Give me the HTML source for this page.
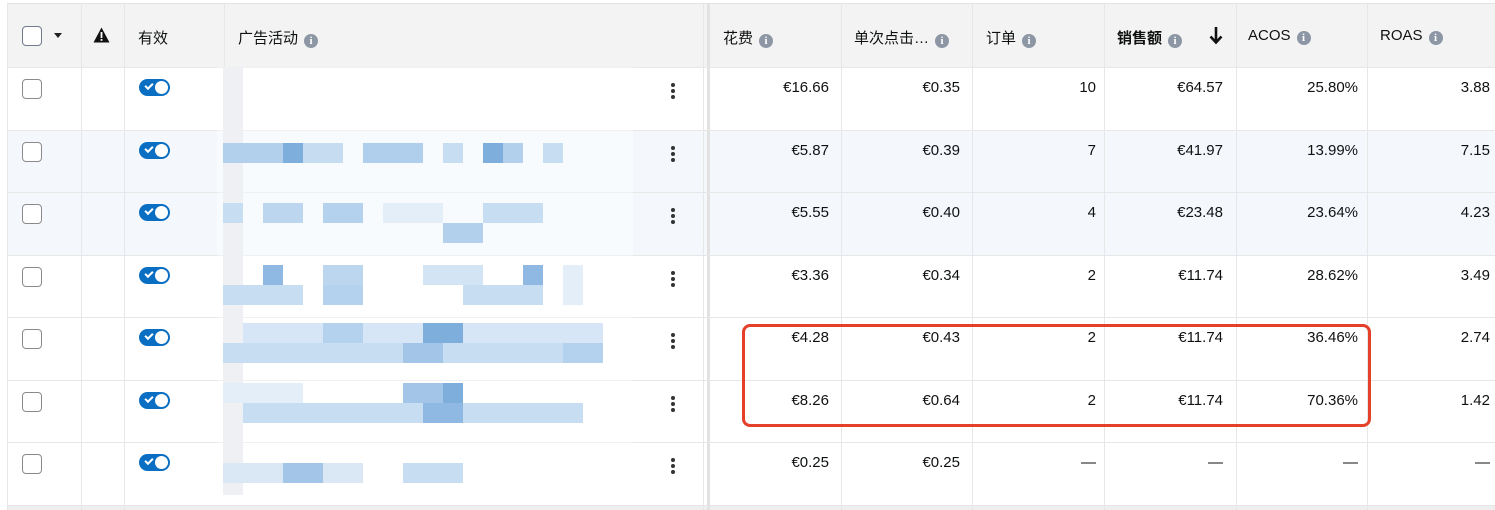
<!DOCTYPE html><html><head><meta charset="utf-8"><style>
body{margin:0;width:1495px;height:510px;overflow:hidden;background:#fff;font-family:"Liberation Sans","Noto Sans CJK SC",sans-serif;font-size:15px;color:#0f1111;position:relative}
.a{position:absolute}
.hd{position:absolute;left:7px;top:3px;width:1488px;height:64px;background:#f3f3f3;border-top:1px solid #e3e3e3}
.vl{position:absolute;top:3px;width:1px;height:507px;background:#e7e7e7}
.hl{position:absolute;left:7px;width:1488px;height:1px;background:#e7e7e7}
.cb{position:absolute;width:18px;height:18px;border:1.5px solid #8a8a8a;border-radius:4px;background:#fff}
.tg{position:absolute;width:31px;height:17px;border-radius:9px;background:#0a6fc2}
.tg:after{content:"";position:absolute;right:2px;top:2px;width:13px;height:13px;border-radius:50%;background:#fff}
.tg:before{content:"";position:absolute;left:6px;top:4px;width:6px;height:3px;border-left:2px solid #fff;border-bottom:2px solid #fff;transform:rotate(-45deg)}
.r{position:absolute;text-align:right}
.h{position:absolute;top:27px}
.i{display:inline-block;width:14px;height:14px;border-radius:50%;background:#8d96a4;color:#fff;font-size:11px;line-height:14px;text-align:center;font-weight:bold;vertical-align:-1px;margin-left:6px;font-family:"Liberation Serif",serif}
.dots{position:absolute;left:671px;width:4px}
.dots i{display:block;width:4px;height:4px;border-radius:50%;background:#333;margin-bottom:2px}
.b{position:absolute;width:20px;height:20px}
</style></head><body>
<div class="hd"></div>
<div class="a" style="left:7px;top:130px;width:1488px;height:125px;background:#f4f8fd"></div>
<div class="a" style="left:7px;top:505px;width:1488px;height:5px;background:#eee"></div>
<div class="vl" style="left:7px"></div><div class="vl" style="left:81px"></div><div class="vl" style="left:124px"></div><div class="vl" style="left:224px;height:64px"></div>
<div class="vl" style="left:703px"></div><div class="a" style="left:707px;top:3px;width:3px;height:507px;background:#e2e2e2"></div>
<div class="vl" style="left:841px"></div><div class="vl" style="left:972px"></div><div class="vl" style="left:1104px"></div><div class="vl" style="left:1236px"></div><div class="vl" style="left:1367px"></div>
<div class="hl" style="top:67px"></div><div class="hl" style="top:130px"></div><div class="hl" style="top:192px"></div><div class="hl" style="top:255px"></div><div class="hl" style="top:317px"></div><div class="hl" style="top:380px"></div><div class="hl" style="top:442px"></div><div class="hl" style="top:505px"></div>
<div class="a" style="left:217px;top:67px;width:416px;height:430px;background:rgba(255,255,255,.4)"></div>
<div class="a" style="left:223px;top:67px;width:20px;height:428px;background:#eef0f3"></div>
<div class="b" style="left:223px;top:143px;width:60px;background:#b2cfeb"></div><div class="b" style="left:283px;top:143px;background:#7eaedc"></div><div class="b" style="left:303px;top:143px;width:40px;background:#c5dcf1"></div><div class="b" style="left:363px;top:143px;width:60px;background:#b0cfec"></div><div class="b" style="left:443px;top:143px;background:#c6ddf2"></div><div class="b" style="left:483px;top:143px;background:#7eaedc"></div><div class="b" style="left:503px;top:143px;background:#b2cfeb"></div><div class="b" style="left:543px;top:143px;background:#c6ddf2"></div>
<div class="b" style="left:223px;top:203px;background:#c6ddf2"></div><div class="b" style="left:263px;top:203px;width:40px;background:#bcd6ef"></div><div class="b" style="left:323px;top:203px;width:40px;background:#b4d1ed"></div><div class="b" style="left:383px;top:203px;width:60px;background:#e3eef9"></div><div class="b" style="left:483px;top:203px;width:60px;background:#c6ddf2"></div><div class="b" style="left:443px;top:223px;width:40px;background:#b2cfeb"></div>
<div class="b" style="left:263px;top:265px;background:#8fb9e2"></div><div class="b" style="left:223px;top:285px;width:80px;background:#c6ddf2"></div><div class="b" style="left:323px;top:265px;width:40px;background:#bcd6ef"></div><div class="b" style="left:323px;top:285px;width:40px;background:#b4d1ed"></div><div class="b" style="left:423px;top:265px;width:60px;background:#d3e4f5"></div><div class="b" style="left:463px;top:285px;width:80px;background:#c6ddf2"></div><div class="b" style="left:523px;top:265px;background:#8fb9e2"></div><div class="b" style="left:563px;top:265px;height:40px;background:#e3eef9"></div>
<div class="b" style="left:243px;top:323px;width:360px;background:#d6e6f6"></div><div class="b" style="left:423px;top:323px;width:40px;background:#7eaedc"></div><div class="b" style="left:323px;top:323px;width:40px;background:#b4d1ed"></div><div class="b" style="left:223px;top:343px;width:380px;background:#c6ddf2"></div><div class="b" style="left:403px;top:343px;width:40px;background:#a3c6e8"></div><div class="b" style="left:563px;top:343px;width:40px;background:#b4d1ed"></div>
<div class="b" style="left:223px;top:383px;width:80px;background:#e3eef9"></div><div class="b" style="left:403px;top:383px;width:60px;background:#a3c6e8"></div><div class="b" style="left:443px;top:383px;background:#7eaedc"></div><div class="b" style="left:243px;top:403px;width:340px;background:#c6ddf2"></div><div class="b" style="left:423px;top:403px;width:40px;background:#8fb9e2"></div>
<div class="b" style="left:223px;top:463px;width:140px;background:#dae8f6"></div><div class="b" style="left:283px;top:463px;width:40px;background:#a3c6e8"></div><div class="b" style="left:403px;top:463px;width:60px;background:#c6ddf2"></div>
<div class="cb" style="left:22px;top:26px;border-color:#6f7a8a"></div>
<div class="a" style="left:54px;top:33px;border:4px solid transparent;border-top:5px solid #222;border-bottom:0"></div>
<svg class="a" style="left:93px;top:27px" width="17" height="16" viewBox="0 0 17 16"><path d="M8.5 0.5L16.5 15.5H0.5Z" fill="#111"/><rect x="7.6" y="5" width="1.8" height="6" fill="#fff"/><rect x="7.6" y="12" width="1.8" height="1.8" fill="#fff"/></svg>
<div class="h" style="left:138px">有效</div>
<div class="h" style="left:238px">广告活动<span class="i">i</span></div>
<div class="h" style="left:723px">花费<span class="i">i</span></div>
<div class="h" style="left:854px">单次点击…<span class="i">i</span></div>
<div class="h" style="left:986px">订单<span class="i">i</span></div>
<div class="h" style="left:1117px;font-weight:bold">销售额<span class="i">i</span></div>
<svg class="a" style="left:1209px;top:26px" width="14" height="19" viewBox="0 0 14 19"><path d="M7 1V16M1.5 10.5L7 16.5L12.5 10.5" stroke="#111" stroke-width="2.6" fill="none"/></svg>
<div class="h" style="left:1248px">ACOS<span class="i">i</span></div>
<div class="h" style="left:1380px">ROAS<span class="i">i</span></div>
<div id="rows"></div>
<div class="a" style="left:742px;top:324px;width:623px;height:97px;border:3px solid #e5402a;border-radius:8px"></div>
<script>
var d=[["€16.66","€0.35","10","€64.57","25.80%","3.88"],["€5.87","€0.39","7","€41.97","13.99%","7.15"],["€5.55","€0.40","4","€23.48","23.64%","4.23"],["€3.36","€0.34","2","€11.74","28.62%","3.49"],["€4.28","€0.43","2","€11.74","36.46%","2.74"],["€8.26","€0.64","2","€11.74","70.36%","1.42"],["€0.25","€0.25","—","—","—","—"]];
var tops=[67,130,192,255,317,380,442],rights=[829,960,1096,1223,1358,1490],h="";
d.forEach(function(r,k){var t=tops[k];
h+='<div class="cb" style="left:22px;top:'+(t+12)+'px"></div><div class="tg" style="left:139px;top:'+(t+12)+'px"></div><div class="dots" style="top:'+(t+16)+'px"><i></i><i></i><i></i></div>';
r.forEach(function(v,j){h+='<div class="r" style="right:'+(1495-rights[j])+'px;top:'+(t+12)+'px">'+v+'</div>';});});
document.getElementById("rows").innerHTML=h;
</script>
</body></html>
